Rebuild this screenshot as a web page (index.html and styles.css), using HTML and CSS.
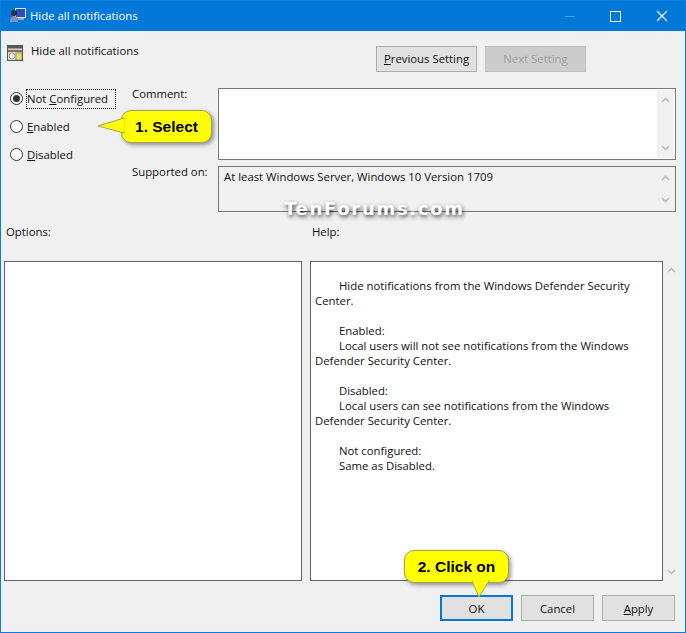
FILE: index.html
```html
<!DOCTYPE html>
<html lang="en">

<head>
    <meta charset="UTF-8" />
    <title>Hide all notifications</title>
    <link rel="stylesheet" href="styles.css">
</head>

<body>
    <div class="window">
        <div class="titlebar">
            <svg class="app-icon" width="17" height="16" viewBox="0 0 17 16">
                <rect x="5" y="0" width="11" height="10" fill="#dfe6f2" />
                <rect x="6" y="1" width="9" height="8" fill="#2a4fc0" />
                <rect x="8" y="10" width="6" height="2" fill="#9aa4b4" />
                <circle cx="4" cy="5" r="3" fill="#2b2f3a" />
                <path d="M0 14c0-4 2-6 4-6s4 2 4 6z" fill="#7f93ad" />
            </svg>
            <span class="title-text">Hide all notifications</span>
            <div class="window-controls">
                <span class="min-icon"></span>
                <span class="max-icon"></span>
                <svg width="12" height="12" viewBox="0 0 12 12">
                    <path d="M1 1l10 10M11 1L1 11" stroke="#fff" stroke-width="1.1" fill="none" />
                </svg>
            </div>
        </div>

        <div class="content">
            <div class="header-row">
                <div class="policy-name">
                    <svg width="17" height="17" viewBox="0 0 17 17">
                        <rect x="0.500" y="0.500" width="15" height="15" fill="#d8d8c8" stroke="#555" />
                        <rect x="0.500" y="0.500" width="15" height="3" fill="#4a5a6a" />
                        <rect x="1" y="5" width="14" height="2" fill="#8a6a5a" />
                        <circle cx="5" cy="11" r="3" fill="#e8e8f0" stroke="#777" stroke-width="0.6" />
                        <rect x="9" y="8" width="6" height="7" fill="#e8e070" stroke="#666" stroke-width="0.6" />
                    </svg>
                    <span>Hide all notifications</span>
                </div>
                <div class="nav-buttons">
                    <button class="btn nav-btn"><u>P</u>revious Setting</button>
                    <button class="btn nav-btn disabled"><u>N</u>ext Setting</button>
                </div>
            </div>

            <div class="settings-row">
                <div class="radios">
                    <label class="radio focused"><span class="dot checked"></span><span class="radio-text">Not <u>C</u>onfigured</span></label>
                    <label class="radio"><span class="dot"></span><span class="radio-text"><u>E</u>nabled</span></label>
                    <label class="radio"><span class="dot"></span><span class="radio-text"><u>D</u>isabled</span></label>
                </div>
                <div class="fields">
                    <div class="field comment-field">
                        <span class="field-label">Comment:</span>
                        <div class="box white">
                            <div class="box-text"></div>
                            <div class="scroll">
                                <svg class="arrow" width="9" height="6" viewBox="0 0 9 6"><path d="M1 5l3.500-3.500L8 5" /></svg>
                                <svg class="arrow" width="9" height="6" viewBox="0 0 9 6"><path d="M1 1l3.500 3.500L8 1" /></svg>
                            </div>
                        </div>
                    </div>
                    <div class="field supported-field">
                        <span class="field-label">Supported on:</span>
                        <div class="box">
                            <div class="box-text">At least Windows Server, Windows 10 Version 1709</div>
                            <div class="scroll">
                                <svg class="arrow" width="9" height="6" viewBox="0 0 9 6"><path d="M1 5l3.500-3.500L8 5" /></svg>
                                <svg class="arrow" width="9" height="6" viewBox="0 0 9 6"><path d="M1 1l3.500 3.500L8 1" /></svg>
                            </div>
                        </div>
                    </div>
                </div>
            </div>

            <div class="pane-labels">
                <span class="options-label">Options:</span>
                <span>Help:</span>
            </div>

            <div class="panes">
                <div class="pane options-pane"></div>
                <div class="pane help-pane">
                    <p class="indent">Hide notifications from the Windows Defender Security Center.</p>
                    <p class="indent gap">Enabled:</p>
                    <p class="indent">Local users will not see notifications from the Windows Defender Security Center.</p>
                    <p class="indent gap">Disabled:</p>
                    <p class="indent">Local users can see notifications from the Windows Defender Security Center.</p>
                    <p class="indent gap">Not configured:</p>
                    <p class="indent">Same as Disabled.</p>
                </div>
                <div class="pane-scroll">
                    <svg class="arrow" width="9" height="6" viewBox="0 0 9 6"><path d="M1 5l3.500-3.500L8 5" /></svg>
                    <svg class="arrow" width="9" height="6" viewBox="0 0 9 6"><path d="M1 1l3.500 3.500L8 1" /></svg>
                </div>
            </div>

            <div class="footer">
                <button class="btn foot-btn ok">OK</button>
                <button class="btn foot-btn">Cancel</button>
                <button class="btn foot-btn"><u>A</u>pply</button>
            </div>
        </div>

        <!-- annotations on top of the screenshot -->
        <div class="callout callout-select">1. Select</div>
        <svg class="tail tail-left" width="26" height="18" viewBox="0 0 26 18">
            <path d="M26 1L0 9l26 7z" fill="#ffff00" stroke="#a0a060" stroke-width="1" />
            <path d="M25 2v13" stroke="#ffff00" stroke-width="3" />
        </svg>
        <div class="callout callout-click">2. Click on</div>
        <svg class="tail tail-down" width="20" height="16" viewBox="0 0 20 16">
            <path d="M1 0l7 16L18 0z" fill="#ffff00" stroke="#a0a060" stroke-width="1" />
            <path d="M2 0h15" stroke="#ffff00" stroke-width="3" />
        </svg>
        <div class="watermark">TenForums.com</div>
    </div>
</body>

</html>
```

FILE: styles.css
```css
html,
body {
    margin: 0;
    padding: 0;
}

body {
    width: 686px;
    height: 633px;
    overflow: hidden;
    font-family: 'Open Sans', 'Noto Sans', sans-serif;
    font-size: 11.35px;
    color: #111;
}

.window {
    position: relative;
    width: 686px;
    height: 633px;
    box-sizing: border-box;
    border: 1px solid #0b7ddb;
    background-color: #f0f0f0;
}

.titlebar {
    display: flex;
    align-items: center;
    height: 30px;
    background-color: #0078d7;
    color: #fff;
    padding-left: 9px;
}

.app-icon {
    margin-right: 3px;
}

.title-text {
    margin-top: -2px;
}

.window-controls {
    margin-left: auto;
    display: flex;
    align-items: center;
    gap: 35px;
    padding-right: 17px;
}

.min-icon {
    width: 10px;
    height: 1px;
    background-color: #4aa0e6;
}

.max-icon {
    width: 9px;
    height: 9px;
    border: 1px solid #fff;
}

.content {
    padding: 0 5px 0 3px;
}

.header-row {
    display: flex;
    justify-content: space-between;
    height: 57px;
    padding-top: 15px;
    box-sizing: border-box;
}

.policy-name {
    display: flex;
    align-items: flex-start;
    gap: 7px;
    padding-left: 3px;
    margin-top: -1px;
}

.policy-name span {
    line-height: 14px;
    margin-top: -1px;
}

.nav-buttons {
    display: flex;
    gap: 8px;
    padding-right: 94px;
}

.btn {
    font-family: inherit;
    font-size: 11.35px;
    color: #111;
    background-color: #e1e1e1;
    border: 1px solid #adadad;
    padding: 0;
}

.nav-btn {
    width: 101px;
    height: 26px;
    padding-bottom: 2px;
}

.disabled {
    background-color: #ccc;
    border-color: #bfbfbf;
    color: #a0a0a0;
}

.disabled u {
    text-decoration: none;
}

.settings-row {
    display: flex;
    padding-right: 4px;
}

.radios {
    display: flex;
    flex-direction: column;
    gap: 6px;
    width: 128px;
    margin-top: -1px;
    padding: 0 0 0 6px;
    box-sizing: border-box;
}

.radio {
    display: flex;
    align-items: center;
    height: 22px;
}

.dot {
    position: relative;
    width: 11px;
    height: 11px;
    border: 1px solid #333;
    border-radius: 50%;
    background-color: #fff;
    margin-right: 3px;
    flex-shrink: 0;
}

.dot.checked::after {
    content: "";
    position: absolute;
    left: 2px;
    top: 2px;
    width: 7px;
    height: 7px;
    border-radius: 50%;
    background-color: #333;
}

.radio-text {
    margin-top: 2px;
    padding: 2px 7px 2px 0;
    line-height: 14px;
    border: 1px dotted transparent;
}

.focused .radio-text {
    border-color: #111;
}

.fields {
    flex: 1;
    display: flex;
    flex-direction: column;
    gap: 6px;
}

.field {
    display: flex;
}

.field-label {
    width: 86px;
    margin-top: -1px;
    line-height: 14px;
    flex-shrink: 0;
}

.box {
    flex: 1;
    display: flex;
    box-sizing: border-box;
    border: 1px solid #767676;
    padding: 1px;
}

.white {
    background-color: #fff;
}

.comment-field .box {
    height: 72px;
}

.supported-field .box {
    height: 46px;
}

.box-text {
    flex: 1;
    padding: 1px 4px;
    line-height: 15px;
}

.scroll {
    width: 17px;
    background-color: #f0f0f0;
    display: flex;
    flex-direction: column;
    justify-content: space-between;
    align-items: center;
    padding: 7px 0;
}

.arrow path {
    fill: none;
    stroke: #bdbdbd;
    stroke-width: 1.6;
}

.pane-labels {
    display: flex;
    height: 49px;
    padding-top: 13px;
    box-sizing: border-box;
    line-height: 14px;
}

.options-label {
    width: 306px;
    padding-left: 2px;
}

.panes {
    display: flex;
    height: 320px;
}

.pane {
    box-sizing: border-box;
    border: 1px solid #646464;
    background-color: #fff;
    flex-shrink: 0;
}

.options-pane {
    width: 298px;
    margin-right: 8px;
}

.help-pane {
    width: 353px;
    padding: 16px 4px 0 4px;
    line-height: 15px;
}

.help-pane p {
    margin: 0;
}

.indent {
    text-indent: 24px;
}

.gap {
    margin-top: 15px !important;
}

.pane-scroll {
    width: 17px;
    flex-shrink: 0;
    display: flex;
    flex-direction: column;
    justify-content: space-between;
    align-items: center;
    padding: 6px 0;
    box-sizing: border-box;
}

.footer {
    display: flex;
    justify-content: flex-end;
    gap: 8px;
    margin-top: 14px;
    padding-right: 5px;
}

.foot-btn {
    width: 73px;
    height: 26px;
}

.ok {
    border: 2px solid #0078d7;
}

.callout {
    position: absolute;
    display: flex;
    align-items: center;
    justify-content: center;
    box-sizing: border-box;
    background-color: #ffff00;
    border: 1px solid #a0a060;
    border-radius: 10px;
    box-shadow: 2px 2px 4px rgba(0, 0, 0, 0.4);
    font-family: 'Liberation Sans', Arial, sans-serif;
    font-weight: 700;
    font-size: 15.5px;
    color: #000;
}

.callout-select {
    left: 120px;
    top: 109px;
    width: 91px;
    height: 33px;
}

.callout-click {
    left: 403px;
    top: 549px;
    width: 105px;
    height: 33px;
}

.tail {
    position: absolute;
    overflow: visible;
}

.tail-left {
    left: 97px;
    top: 116px;
}

.tail-down {
    left: 470px;
    top: 580px;
}

.watermark {
    position: absolute;
    left: 283px;
    top: 197px;
    font-family: 'DejaVu Sans', sans-serif;
    font-weight: 700;
    font-size: 18px;
    letter-spacing: 1.7px;
    color: #fff;
    text-shadow: 1px 2px 4px rgba(0, 0, 0, 0.75);
}
```
